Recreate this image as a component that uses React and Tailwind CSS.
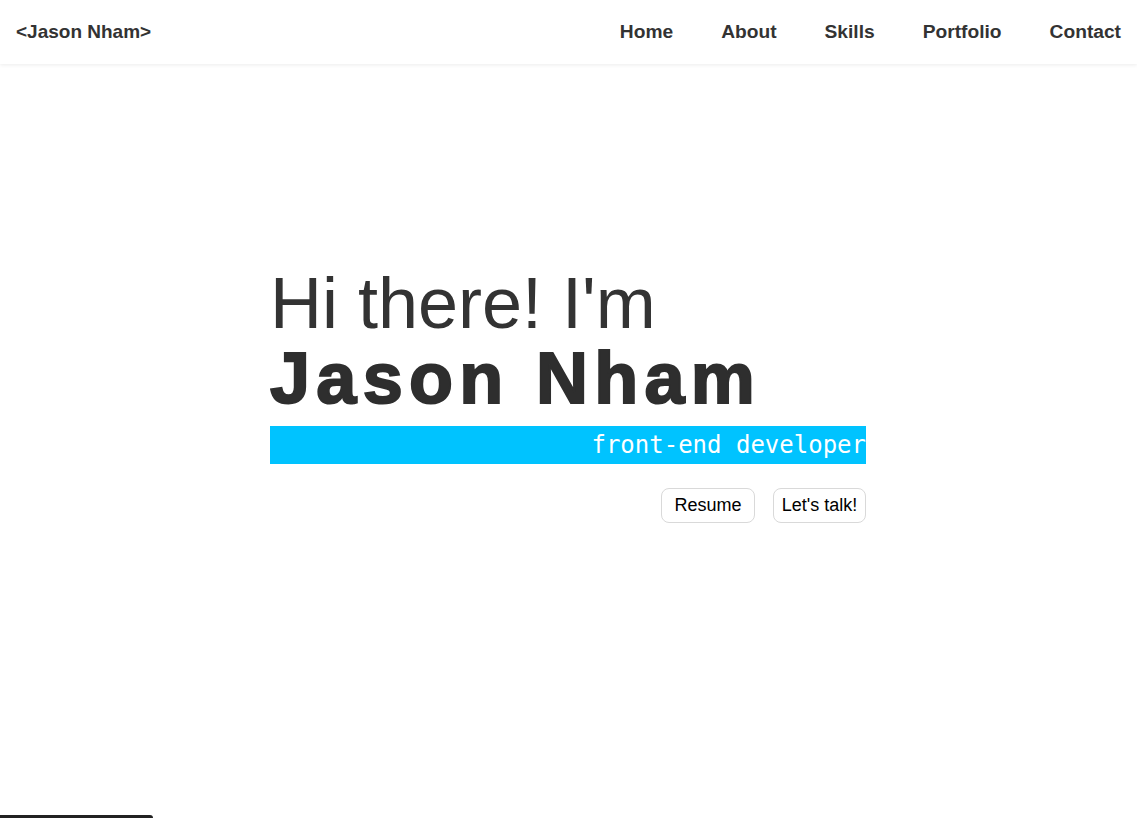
const NAV = ['Home', 'About', 'Skills', 'Portfolio', 'Contact']

function Navbar() {
  return (
    <header className="relative z-10 flex h-16 items-center justify-between bg-white pl-4 pr-4 shadow-[0_1px_4px_rgba(0,0,0,0.08)]">
      <a className="text-[19px] font-bold text-[#333]">&lt;Jason Nham&gt;</a>
      <nav className="flex items-center gap-12">
        {NAV.map((item) => (
          <a key={item} className="text-[19.2px] font-bold text-[#333]">
            {item}
          </a>
        ))}
      </nav>
    </header>
  )
}

function Hero() {
  return (
    <section className="flex justify-center pt-[202px] pr-px">
      <div className="flex w-[596px] flex-col">
        <h1 className="text-[72px] leading-[75px] font-normal text-[#333]">Hi there! I'm</h1>
        <h2 className="text-[72px] leading-[75px] font-bold tracking-[6.3px] text-[#2e2e2e] [-webkit-text-stroke:2px_#2e2e2e]">
          Jason Nham
        </h2>
        <div className="mt-[10px] h-[38px] bg-[#00c3ff] text-right font-['DejaVu_Sans_Mono',monospace] text-[24px] leading-[38px] text-white">
          front-end developer
        </div>
        <div className="mt-6 flex justify-end gap-[18px]">
          <button className="h-[35px] w-[94px] rounded-lg border border-[#d9d9d9] bg-white text-[18px] text-black">
            Resume
          </button>
          <button className="h-[35px] w-[93px] rounded-lg border border-[#d9d9d9] bg-white text-[18px] text-black">
            Let's talk!
          </button>
        </div>
      </div>
    </section>
  )
}

export default function App() {
  return (
    <div className="relative min-h-[818px] bg-white font-['Liberation_Sans',Arial,sans-serif]">
      <Navbar />
      <Hero />
      <div className="fixed bottom-0 left-0 h-[3px] w-[153px] rounded-tr bg-[#222]" />
    </div>
  )
}
